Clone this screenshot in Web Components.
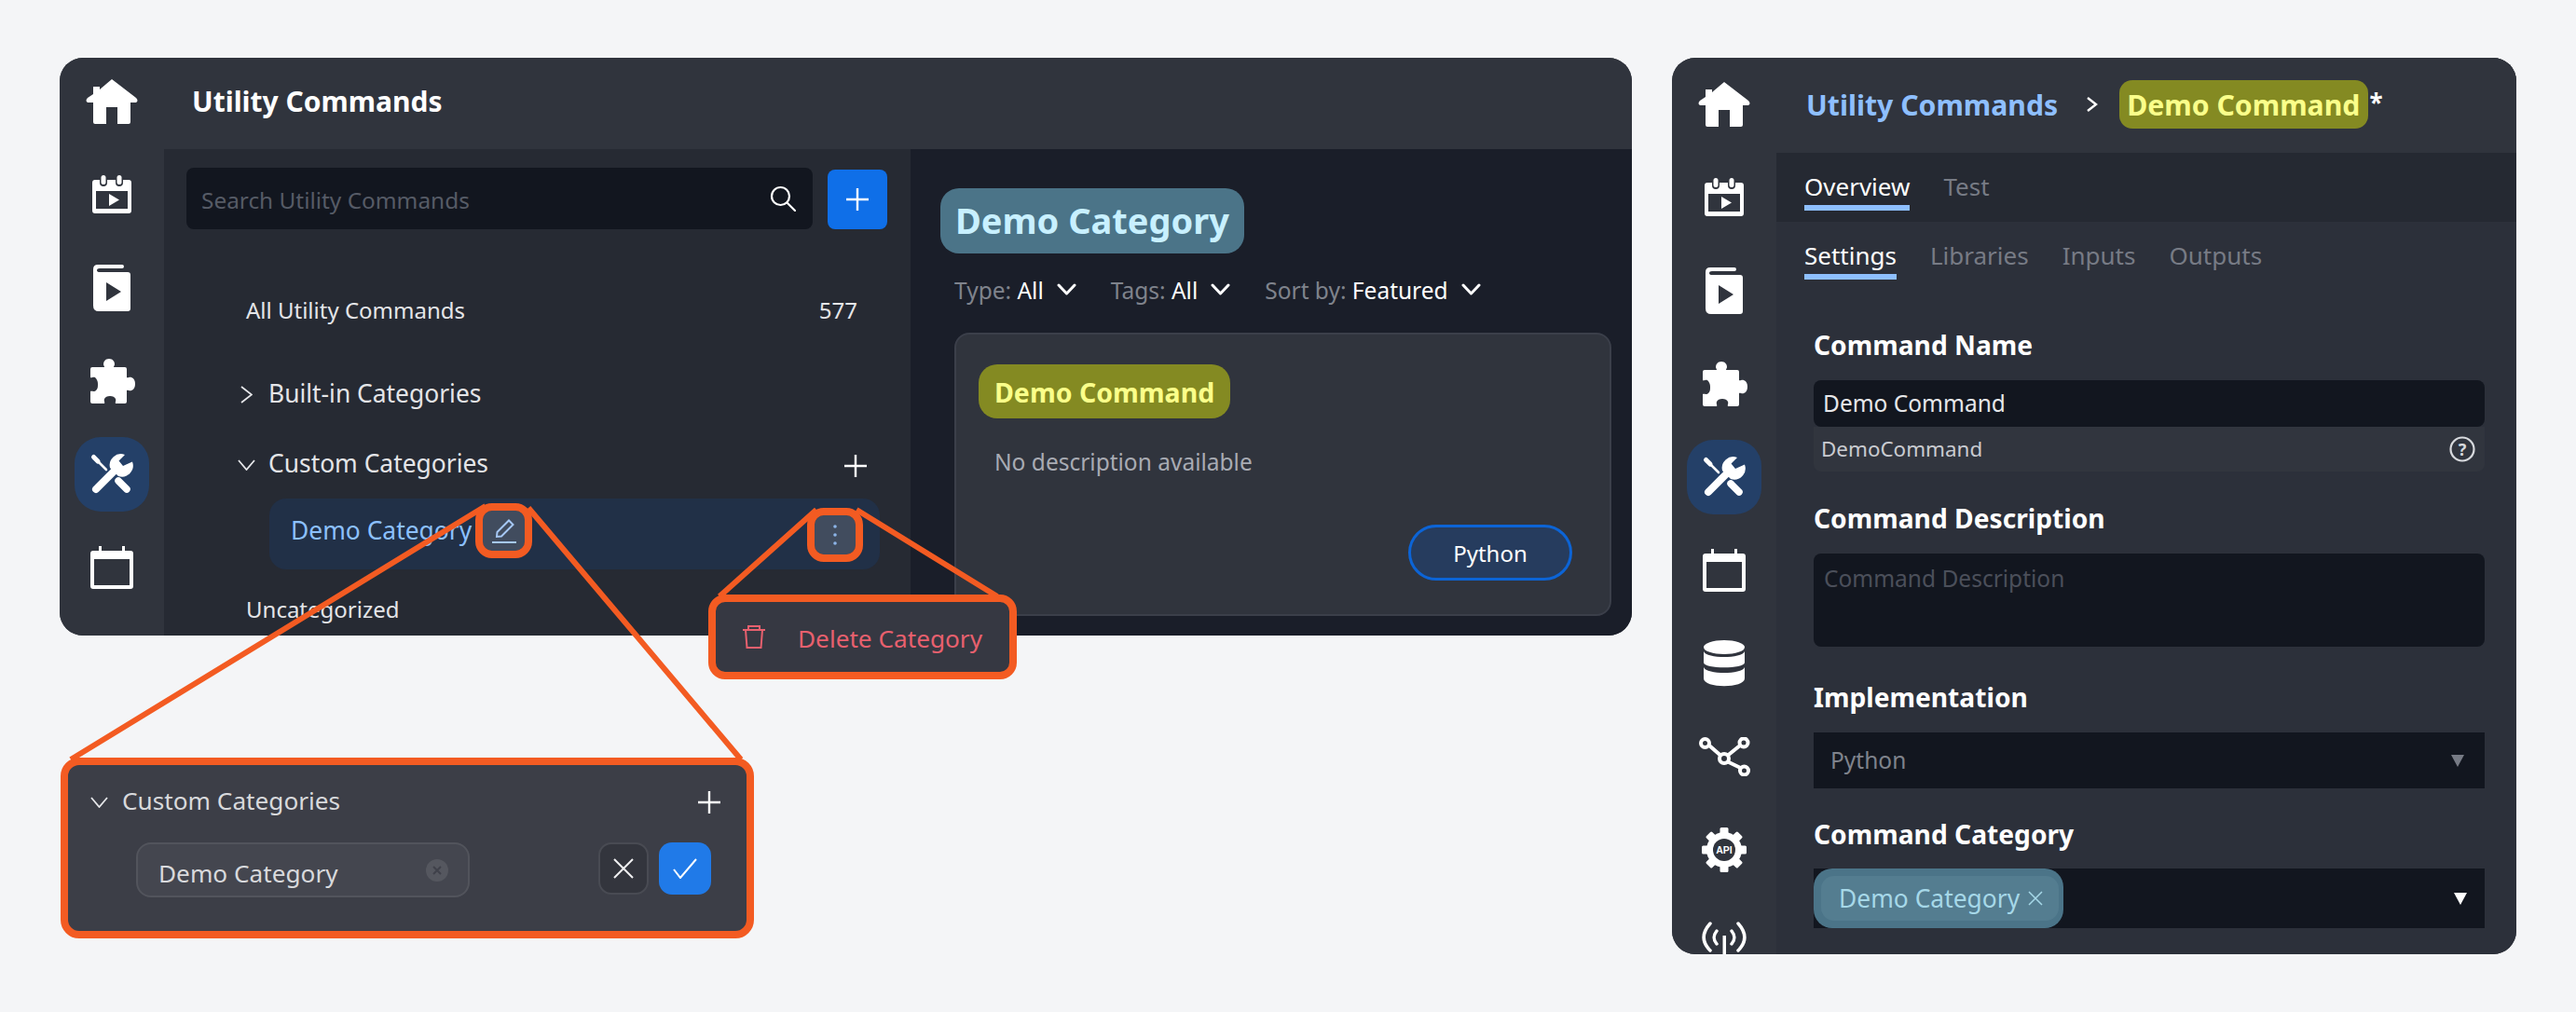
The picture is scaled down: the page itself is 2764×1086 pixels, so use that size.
<!DOCTYPE html>
<html><head><meta charset="utf-8">
<style>
html,body{margin:0;padding:0;background:#f4f5f7}
</style></head><body>
<demo-canvas>
  <app-window style="--win-w:1687px;--win-h:620px">
    <nav-rail items="home,filmcal,book,puzzle,tools,cal" active="tools" style="--shift:-3px"></nav-rail>
    <commands-browser></commands-browser>
  </app-window>
  <app-window style="--win-w:906px;--win-h:962px">
    <nav-rail items="home,filmcal,book,puzzle,tools,cal,db,net,gear,antenna" active="tools"></nav-rail>
    <command-editor></command-editor>
  </app-window>
  <callout-lines></callout-lines>
  <delete-callout></delete-callout>
  <rename-callout></rename-callout>
</demo-canvas>
<script>
const ICONS={
 home:[56,48,'<path fill="#fff" d="M28 0 L54 20 C56 22 56 24 54 25 H48 V46 Q48 48 46 48 H34 V30 H22 V48 H10 Q8 48 8 46 V25 H2 C0 24 0 22 2 20 L8 16 V8 H15 V11 Z"/>'],
 filmcal:[42,42,'<path fill="#fff" fill-rule="evenodd" d="M3 5H8V8a4 4 0 0 0 8 0V5H25V8a4 4 0 0 0 8 0V5H39Q42 5 42 8V38Q42 41 39 41H3Q0 41 0 38V8Q0 5 3 5Z M4 17V36H38V17Z"/><rect x="9.5" y="0" width="5" height="10" rx="2.5" fill="#fff"/><rect x="26.5" y="0" width="5" height="10" rx="2.5" fill="#fff"/><path fill="#fff" d="M18 20L29 26.5L18 33Z"/>'],
 book:[40,50,'<path fill="#fff" fill-rule="evenodd" d="M0 5Q0 0 5 0H31Q33 0 33 2Q33 4 31 4H7Q4 4 4 6Q4 8 7 8H37Q40 8 40 11V47Q40 50 37 50H6Q0 50 0 44Z M14 19V39L30 29Z"/>'],
 puzzle:[49,48,'<path fill="#fff" d="M21 0C25 0 27 3 27 6C27 7 26 8 26 9H38Q40 9 40 11V20C41 21 43 19 45 20C48 21 49 24 49 27C49 30 48 33 45 34C43 35 41 33 40 34V46Q40 48 38 48H28C27 47 29 45 28 43C27 41 25 40 22 40C19 40 17 41 16 43C15 45 17 47 16 48H3Q1 48 1 46V35C2 34 5 36 7 34C9 32 9 30 9 27C9 24 8 22 6 20C4 19 2 21 1 20V11Q1 9 3 9H16C16 8 15 7 15 6C15 3 17 0 21 0Z"/>'],
 tools:[80,80,'<g fill="none" stroke="#fff" stroke-linecap="round"><path stroke-width="2.6" d="M21 22L34 35"/><path stroke-width="5" d="M20.5 21.5L25 26"/><path stroke-width="7.5" d="M47 47L56 56"/><path stroke-width="8" d="M23 56L42 37"/></g><path fill="#fff" d="M54 19L47.5 25.5L52 31L62 26.5A12 12 0 0 1 47 42L38 33A12 12 0 0 1 54 19Z"/>'],
 cal:[46,46,'<path fill="#fff" fill-rule="evenodd" d="M3 5H43Q46 5 46 8V43Q46 46 43 46H3Q0 46 0 43V8Q0 5 3 5Z M4 14V42H42V14Z"/><rect x="9" width="3" height="7" fill="#fff"/><rect x="34" width="3" height="7" fill="#fff"/>'],
 db:[44,50,'<g fill="#fff"><ellipse cx="22" cy="7.5" rx="22" ry="7.5"/><path d="M0 12C3 20 41 20 44 12V24C44 31 0 31 0 24Z"/><path d="M0 29C3 37 41 37 44 29V41C44 52 0 52 0 41Z"/></g>'],
 net:[55,42,'<g fill="none" stroke="#fff" stroke-width="4"><circle cx="6.5" cy="6.5" r="4.5"/><circle cx="48" cy="6" r="4.5"/><circle cx="27" cy="23" r="5"/><circle cx="48.5" cy="36" r="4.5"/><path d="M11 9L23 19.5M44 9L31 19.5M31 26.5L44.5 33"/></g>'],
 gear:[48,48,'<g fill="#fff"><circle cx="24" cy="24" r="19"/>'+[0,45,90,135,180,225,270,315].map(a=>`<rect x="19.5" y="0" width="9" height="10" rx="1.5" transform="rotate(${a} 24 24)"/>`).join('')+'</g><circle cx="24" cy="24" r="12" fill="#30343d"/><text x="24" y="28" text-anchor="middle" font-family="Liberation Sans" font-weight="700" font-size="10.5" fill="#fff">API</text>'],
 antenna:[48,35,'<g fill="none" stroke="#fff" stroke-linecap="round" stroke-width="3.5"><path d="M9 2C0 12 0 22 9 31M39 2C48 12 48 22 39 31M16 10C12 15 12 19 16 24M32 10C36 15 36 19 32 24"/></g><rect x="22.5" y="15" width="3.5" height="20" fill="#fff"/>'],
 search:[28,28,'<g fill="none" stroke="#fff" stroke-width="2.2" stroke-linecap="round"><circle cx="11.5" cy="11.5" r="9.5"/><path d="M18.5 18.5L27 27"/></g>'],
 plus:[24,24,'<path stroke="#fff" stroke-width="2.4" d="M12 0V24M0 12H24"/>'],
 right:[13,19,'<path fill="none" stroke="#e6e7ea" stroke-width="1.8" d="M1 1L12 9.5L1 18"/>'],
 down:[19,12,'<path fill="none" stroke="#e6e7ea" stroke-width="1.8" d="M1 1L9.5 11L18 1"/>'],
 chev:[21,14,'<path fill="none" stroke="#fff" stroke-width="3" stroke-linecap="round" stroke-linejoin="round" d="M2 2L10.5 11L19 2"/>'],
 pencil:[26,26,'<g fill="none" stroke="#a6c8f5" stroke-width="2"><path d="M5 19L5.5 14L18 1.5L22.5 6L10 18.5Z"/><path d="M0 25H26"/></g>'],
 kebab:[4,22,'<g fill="#8cb4e8"><circle cx="2" cy="2" r="1.8"/><circle cx="2" cy="11" r="1.8"/><circle cx="2" cy="20" r="1.8"/></g>'],
 trash:[24,25,'<g fill="none" stroke="#e8606e" stroke-width="2"><path d="M0 5H24M6 5V1H18V5M3 5L4.5 24H19.5L21 5"/></g>'],
 help:[28,28,'<circle cx="14" cy="14" r="12.5" fill="none" stroke="#d8dade" stroke-width="2.2"/><text x="14" y="20.5" text-anchor="middle" font-family="Noto Sans" font-weight="700" font-size="18" fill="#d8dade">?</text>'],
 x:[22,22,'<path stroke="#f0f0f2" stroke-width="2" d="M1 1L21 21M21 1L1 21"/>'],
 check:[26,22,'<path fill="none" stroke="#fff" stroke-width="2" d="M1 12L8 21L25 1"/>'],
 cross:[10,10,'<path stroke="#3f414a" stroke-width="2" d="M1 1L9 9M9 1L1 9"/>'],
 chipx:[16,16,'<path stroke="#a6d8e8" stroke-width="1.5" d="M1 1L15 15M15 1L1 15"/>'],
 crumb:[12,16,'<path fill="none" stroke="#fff" stroke-width="2.4" d="M1 1L10 8L1 15"/>']
};
customElements.define('ui-icon',class extends HTMLElement{
  constructor(){super();this.attachShadow({mode:'open'});}
  connectedCallback(){
    const [w,h,b]=ICONS[this.getAttribute('name')];
    this.shadowRoot.innerHTML=`<style>:host{display:inline-flex;flex:none}svg{display:block}</style><svg width="${w}" height="${h}" viewBox="0 0 ${w} ${h}">${b}</svg>`;
  }
});
function def(tag,css,html){
  customElements.define(tag,class extends HTMLElement{
    constructor(){super();this.attachShadow({mode:'open'});}
    connectedCallback(){
      if(this._done)return;this._done=1;
      this.shadowRoot.innerHTML=`<style>${css}</style>${typeof html==='function'?html(this):html}`;
    }
  });
}
def('demo-canvas',`:host{display:flex;position:relative;box-sizing:border-box;width:2764px;height:1086px;padding:62px 64px 0;gap:43px;align-items:flex-start;background:#f4f5f7;overflow:hidden;font-family:"Noto Sans","Open Sans",sans-serif}`,'<slot></slot>');
def('app-window',`:host{display:flex;flex:none;width:var(--win-w);height:var(--win-h);border-radius:25px;overflow:hidden;background:#30343d;color:#fff}`,'<slot></slot>');
def('nav-rail',`:host{display:flex;flex-direction:column;flex:none;width:112px;background:#30343d;overflow:hidden}
 .in{display:flex;flex-direction:column;margin-top:var(--shift,0px)}
 .i{height:100px;flex:none;display:flex;align-items:center;justify-content:center;position:relative}
 .a{width:80px;height:80px;border-radius:28px;background:#244068;display:flex;align-items:center;justify-content:center}
 .end{align-items:flex-end;height:62px}`,
 h=>{const act=h.getAttribute('active');return `<div class="in">`+h.getAttribute('items').split(',').map(n=>n===act?`<div class="i"><div class="a"><ui-icon name="${n}"></ui-icon></div></div>`:`<div class="i ${n==='antenna'?'end':''}"><ui-icon name="${n}"></ui-icon></div>`).join('')+`</div>`});

def('search-bar',`:host{display:flex;gap:16px;align-items:flex-end}
 .box{flex:1;height:66px;background:#12161f;border-radius:8px;display:flex;align-items:center;justify-content:space-between;padding:0 18px 0 16px;box-sizing:border-box;color:#565b66;font-size:24.4px}
 .box span{margin-top:3px}
 .add{width:64px;height:64px;background:#0f6fe8;border-radius:8px;display:flex;align-items:center;justify-content:center}`,
 `<div class="box"><span>Search Utility Commands</span><ui-icon name="search"></ui-icon></div><div class="add"><ui-icon name="plus"></ui-icon></div>`);

def('tree-row',`:host{display:flex;align-items:center;box-sizing:border-box;height:40px;font-size:var(--fs,24px);color:#e4e5e8;margin-top:var(--mt,0);padding:0 var(--pr,0) var(--pb,2px) var(--pl,0)}
 .c{width:31px;flex:none;margin:0 8px 0 -39px;display:flex;justify-content:center;padding-top:4px}
 .sp{flex:1}
 ::slotted(ui-icon){margin-top:6px}`,
 h=>{const c=h.getAttribute('chev');return `${c?`<span class="c"><ui-icon name="${c}"></ui-icon></span>`:''}<span><slot></slot></span><span class="sp"></span><slot name="end"></slot>`});

def('category-row',`:host{display:flex;align-items:center;height:76px;margin:17px 33px 0 113px;background:#213047;border-radius:18px;padding:0 26px 0 23px;box-sizing:border-box;font-size:26.4px;color:#8cc0ff}
 span{margin-top:-8px}
 .b{background:#414c5e;border-radius:10px;display:flex;align-items:center;justify-content:center;outline:8px solid #f35b22}
 .e{width:45px;height:43px;margin:-7px 0 0 12px}
 .m{width:44px;height:42px;margin:2px 0 0 auto}`,
 `<span>Demo Category</span><div class="b e"><ui-icon name="pencil"></ui-icon></div><div class="b m"><ui-icon name="kebab"></ui-icon></div>`);

def('filter-bar',`:host{display:flex;align-items:center;height:40px;margin:19px 0 0 15px;font-size:24.5px;color:#7f838c}
 b{font-weight:400;color:#fff}
 .f{display:flex;align-items:center;margin-right:37px}
 ui-icon{margin-left:14px}`,
 `<span class="f">Type:&nbsp;<b>All</b><ui-icon name="chev"></ui-icon></span><span class="f">Tags:&nbsp;<b>All</b><ui-icon name="chev"></ui-icon></span><span class="f">Sort by:&nbsp;<b>Featured</b><ui-icon name="chev"></ui-icon></span>`);

def('command-card',`:host{display:block;box-sizing:border-box;height:304px;margin:26px 0 0 15px;width:705px;background:#30343d;border:2px solid #3b3f4a;border-radius:16px;padding:32px 40px 0 24px;position:relative}
 .p{display:inline-flex;align-items:center;height:58px;padding:2px 17px 0;box-sizing:border-box;background:#848a22;border-radius:20px;color:#faff8a;font-weight:700;font-size:28.5px}
 .d{margin-top:27px;height:40px;line-height:40px;color:#a8abb3;font-size:24.5px;padding-left:17px}
 .f{display:flex;justify-content:flex-end;margin-top:47px}
 .l{box-sizing:border-box;width:176px;height:60px;display:flex;align-items:center;justify-content:center;background:#263c5e;border:3px solid #0c64d6;border-radius:30px;font-size:24px;color:#fff}`,
 `<div class="p">Demo Command</div><div class="d">No description available</div><div class="f"><span class="l">Python</span></div>`);

def('commands-browser',`:host{flex:1;display:flex;flex-direction:column;min-width:0}
 header{height:98px;box-sizing:border-box;padding-bottom:5px;flex:none;display:flex;align-items:center;padding-left:30px;font-weight:700;font-size:30px;background:#30343d}
 .body{flex:1;display:flex;min-height:0}
 .mid{width:801px;flex:none;background:#262a33;padding:20px 0 0;box-sizing:border-box;overflow:hidden}
 search-bar{margin:0 25px 0 24px}
 .list{margin-top:67px}
 .cnt{flex:1;background:#1a1e29;padding:42px 22px 0 32px;box-sizing:border-box}
 .pill{display:inline-flex;align-items:center;height:70px;padding:0 16px 3px;background:#4b7488;border-radius:20px;color:#c8f0ff;font-weight:700;font-size:38px;box-sizing:border-box}
 .hd{display:flex}`,
 `<header>Utility Commands</header><div class="body"><div class="mid"><search-bar></search-bar><div class="list">
   <tree-row style="--pl:88px;--pr:57px">All Utility Commands<span slot="end">577</span></tree-row>
   <tree-row chev="right" style="--pl:112px;--mt:50px;--fs:26.4px;--pb:3px">Built-in Categories</tree-row>
   <tree-row chev="down" style="--pl:112px;--mt:35px;--pr:47px;--fs:26.4px;--pb:3px">Custom Categories<ui-icon slot="end" name="plus"></ui-icon></tree-row>
   <category-row></category-row>
   <tree-row style="--pl:88px;--mt:23px">Uncategorized</tree-row>
 </div></div><div class="cnt"><div class="hd"><span class="pill">Demo Category</span></div><filter-bar></filter-bar><command-card></command-card></div></div>`);

def('tab-strip',`:host{display:flex;gap:36px;align-items:flex-start;font-size:26px;color:#777b85}
 span{display:block;height:44px;line-height:36px;box-sizing:border-box}
 .on{color:#fff;border-bottom:6px solid #8ebfff}`,
 h=>{const on=h.getAttribute('on');return h.getAttribute('tabs').split(',').map(t=>`<span class="${t===on?'on':''}">${t}</span>`).join('')});

def('form-field',`:host{display:block;margin-top:var(--mt,0)}
 .l{height:40px;line-height:37px;font-weight:700;font-size:28.2px;color:#fff}
 .c{margin-top:var(--gap,16px)}`,
 h=>`<div class="l">${h.getAttribute('label')}</div><div class="c"><slot></slot></div>`);

def('text-input',`:host{display:flex;align-items:center;box-sizing:border-box;height:var(--ih,50px);background:#12161f;border-radius:var(--r,8px);padding:0 var(--ipr,10px) 0 var(--ipl,10px);font-size:24.5px;color:var(--c,#e6e7ea);justify-content:space-between}
 :host([top]){align-items:flex-start;padding-top:12px;padding-left:11px}
 span{margin-top:-2px}`,'<span><slot></slot></span><slot name="end"></slot>');

def('command-editor',`:host{flex:1;display:flex;flex-direction:column;min-width:0;background:#2c303a}
 header{height:102px;box-sizing:border-box;padding-bottom:2px;flex:none;background:#30343d;display:flex;align-items:center;padding-left:32px;font-weight:700;font-size:30.2px;color:#8ebfff}
 header ui-icon{margin:0 23px 0 31px}
 .hp{display:flex;align-items:center;height:52px;padding:0 9px 0 8px;background:#848a22;border-radius:14px;color:#faff8a}
 .st{color:#fff;margin:-4px 0 0 1px;font-size:26px}
 .t1{height:74px;flex:none;background:#252932;padding:18px 0 0 30px;box-sizing:border-box}
 .t2{padding:18px 0 0 30px;height:62px;flex:none;box-sizing:border-box}
 .form{padding:52px 34px 0 40px;flex:1;overflow:hidden}
 .sl{display:flex;align-items:center;justify-content:space-between;box-sizing:border-box;height:48px;padding:0 8px;background:#31353e;border-radius:0 0 8px 8px;font-size:22.4px;color:#c9cbd0}
 .sl span{margin-top:-2px}
 .sl ui-icon{margin:0 2px 0 0}
 .tri{width:0;height:0;border-left:7px solid transparent;border-right:7px solid transparent;border-top:13px solid #777b85}
 .cat{display:flex;align-items:stretch;height:64px;background:#12161f;justify-content:space-between}
 .chip{width:268px;box-sizing:border-box;background:#4b7488;border-radius:20px;padding:8px 5px 8px 8px;display:flex}
 .chip>div{flex:1;display:flex;align-items:center;background:#547d90;border-radius:14px;padding-left:19px;font-size:26.4px;color:#a6d8e8;gap:9px}
 .ct{align-self:center;border-top-color:#fff;margin-right:19px}`,
 `<header>Utility Commands<ui-icon name="crumb"></ui-icon><span class="hp">Demo Command</span><span class="st">*</span></header>
  <div class="t1"><tab-strip tabs="Overview,Test" on="Overview"></tab-strip></div>
  <div class="t2"><tab-strip tabs="Settings,Libraries,Inputs,Outputs" on="Settings"></tab-strip></div>
  <div class="form">
   <form-field label="Command Name"><text-input>Demo Command</text-input><div class="sl"><span>DemoCommand</span><ui-icon name="help"></ui-icon></div></form-field>
   <form-field label="Command Description" style="--mt:32px"><text-input top style="--ih:100px;--c:#4b4f5a">Command Description</text-input></form-field>
   <form-field label="Implementation" style="--mt:36px"><text-input style="--ih:60px;--r:0;--ipl:18px;--ipr:22px;--c:#7f838c">Python<span slot="end" class="tri"></span></text-input></form-field>
   <form-field label="Command Category" style="--mt:31px;--gap:15px"><div class="cat"><div class="chip"><div>Demo Category<ui-icon name="chipx"></ui-icon></div></div><span class="tri ct"></span></div></form-field>
  </div>`);

def('callout-lines',`:host{position:absolute;inset:0;pointer-events:none;display:block}svg{display:block}`,
 `<svg width="2764" height="1086" fill="none" stroke="#f35b22" stroke-width="6"><path d="M521 543L76 815M567 545L795 815"/><path d="M876 547L772 640M919 547L1070 640"/></svg>`);

def('delete-callout',`:host{position:absolute;left:760px;top:638px;width:331px;height:91px;box-sizing:border-box;border:8px solid #f35b22;border-radius:18px;background:#363842;display:flex;align-items:center;padding-left:29px;gap:35px;font-size:26.2px;color:#e8606e}
 span{margin-top:3px}`,
 `<ui-icon name="trash"></ui-icon><span>Delete Category</span>`);

def('rename-callout',`:host{position:absolute;left:65px;top:813px;width:744px;height:194px;box-sizing:border-box;border:8px solid #f35b22;border-radius:20px;background:#3c3e47;color:#d8d9dc;font-size:26.2px;padding:20px 28px 0 24px;display:block}
 .r1{display:flex;align-items:center;height:40px}
 .r1 .t{margin-left:15px;margin-top:-4px}
 .r1 .p{margin-left:auto}
 .r2{display:flex;margin:23px 0 0 49px;align-items:flex-start}
 .in{box-sizing:border-box;width:358px;height:59px;background:#44464f;border:2px solid #52545c;border-radius:16px;display:flex;align-items:center;justify-content:space-between;padding:0 21px 0 22px}
 .in>span:first-child{margin-top:6px}
 .cl{width:24px;height:24px;border-radius:50%;background:#55575f;display:flex;align-items:center;justify-content:center}
 .b{box-sizing:border-box;width:54px;height:56px;border-radius:14px;display:flex;align-items:center;justify-content:center}
 .no{background:#33353d;border:2px solid #494b53;margin-left:138px}
 .ok{width:56px;background:#207ae8;margin-left:11px}`,
 `<div class="r1"><ui-icon name="down"></ui-icon><span class="t">Custom Categories</span><ui-icon class="p" name="plus"></ui-icon></div>
  <div class="r2"><div class="in"><span>Demo Category</span><span class="cl"><ui-icon name="cross"></ui-icon></span></div><span class="b no"><ui-icon name="x"></ui-icon></span><span class="b ok"><ui-icon name="check"></ui-icon></span></div>`);
</script>
</body></html>
